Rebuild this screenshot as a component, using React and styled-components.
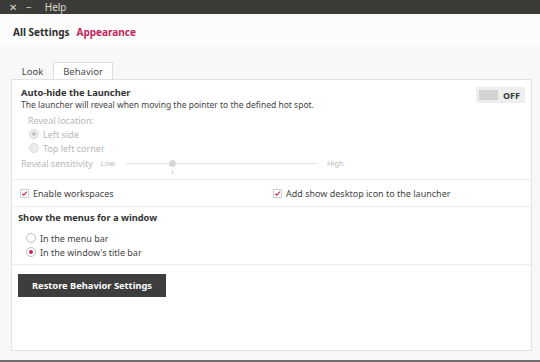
import styled, { createGlobalStyle } from 'styled-components';

const GlobalStyle = createGlobalStyle`
  html, body {
    margin: 0;
    padding: 0;
    background: #f8f8f8;
  }
  * {
    box-sizing: border-box;
  }
`;

const ACCENT = '#c7245a';
const TEXT = '#3c3c3c';
const MUTED = '#b8b8b8';

const Window = styled.div`
  display: flex;
  flex-direction: column;
  width: 540px;
  height: 362px;
  font-family: 'Noto Sans', 'Open Sans', sans-serif;
  color: ${TEXT};
  border-bottom: 2px solid #6f6f6f;
  overflow: hidden;
`;

const TopBar = styled.div`
  display: flex;
  align-items: center;
  height: 14px;
  padding-left: 9px;
  background: #3c3b37;
  color: #dfdbd2;
  font-size: 10px;
`;

const BarItem = styled.span`
  margin-right: ${(p) => p.$gap || 0}px;
  line-height: 14px;
`;

const Header = styled.div`
  display: flex;
  align-items: center;
  gap: 7px;
  height: 32px;
  padding: 4px 0 0 13px;
  background: #fcfcfc;
  font-size: 10px;
`;

const Crumb = styled.span`
  font-weight: 700;
  color: ${(p) => (p.$active ? ACCENT : '#2e2e2e')};
`;

const Body = styled.div`
  padding: 16px 8px 0 11px;
`;

const Tabs = styled.div`
  display: flex;
  height: 17px;
  padding-left: 1px;
`;

const Tab = styled.div`
  display: flex;
  align-items: center;
  justify-content: center;
  width: ${(p) => p.$w}px;
  height: 17px;
  font-size: 9.5px;
  color: #4a4a4a;
  background: ${(p) => (p.$active ? '#fff' : 'transparent')};
  border: 1px solid ${(p) => (p.$active ? '#dedede' : 'transparent')};
  border-bottom: none;
  position: relative;
  z-index: 1;
  margin-bottom: -1px;
`;

const Panel = styled.div`
  height: 272px;
  background: #fff;
  border: 1px solid #e2e2e2;
  display: flex;
  flex-direction: column;
`;

const Section = styled.div`
  padding: ${(p) => p.$pad};
  border-bottom: 1px solid #ececec;
`;

const HeadRow = styled.div`
  display: flex;
  justify-content: space-between;
  align-items: flex-start;
`;

const Title = styled.div`
  font-size: 9.3px;
  font-weight: 700;
  line-height: 12px;
  color: #333;
`;

const Desc = styled.div`
  font-size: 8.5px;
  line-height: 10px;
  margin-top: 1px;
  color: #444;
`;

const Toggle = styled.div`
  display: flex;
  align-items: center;
  width: 49px;
  height: 16px;
  padding: 0 3px;
  background: #eeeeee;
  margin-right: 6px;
`;

const Knob = styled.div`
  width: 19px;
  height: 10px;
  background: #d3d3d3;
  margin-right: 5px;
`;

const ToggleText = styled.span`
  font-size: 9px;
  font-weight: 700;
  color: #3a3a3a;
`;

const Indent = styled.div`
  padding-left: ${(p) => p.$left}px;
  margin-top: ${(p) => p.$top || 0}px;
`;

const Label = styled.div`
  font-size: 9px;
  line-height: 12px;
  color: ${(p) => (p.$muted ? MUTED : '#444')};
`;

const RadioRow = styled.div`
  display: flex;
  align-items: center;
  height: 14px;
  gap: 4px;
  font-size: 9px;
  color: ${(p) => (p.$muted ? MUTED : '#444')};
`;

const Radio = styled.span`
  width: 10px;
  height: 10px;
  border-radius: 50%;
  border: 1px solid ${(p) => (p.$muted ? '#dcdcdc' : '#bdbdbd')};
  background: ${(p) => (p.$muted ? '#ececec' : '#fff')};
  display: flex;
  align-items: center;
  justify-content: center;
  flex: none;
  &::after {
    content: '';
    display: ${(p) => (p.$on ? 'block' : 'none')};
    width: 4px;
    height: 4px;
    border-radius: 50%;
    background: ${(p) => (p.$muted ? '#c4c4c4' : ACCENT)};
  }
`;

const SliderRow = styled.div`
  display: flex;
  align-items: center;
  height: 14px;
  margin-top: 1px;
  font-size: 9px;
  color: ${MUTED};
`;

const Small = styled.span`
  font-size: 7.5px;
  color: #bbb;
  margin: ${(p) => p.$m};
`;

const Track = styled.div`
  position: relative;
  width: 191px;
  height: 1px;
  background: #e3e3e3;
`;

const Thumb = styled.span`
  position: absolute;
  left: 43px;
  top: -3px;
  width: 7px;
  height: 7px;
  border-radius: 50%;
  background: #d6d6d6;
  &::after {
    content: '';
    position: absolute;
    left: 3px;
    top: 11px;
    width: 1px;
    height: 3px;
    background: #c8c8c8;
  }
`;

const CheckGrid = styled.div`
  display: grid;
  grid-template-columns: 253px 1fr;
  align-items: center;
  height: 27px;
  padding-left: 8px;
  border-bottom: 1px solid #ececec;
`;

const CheckItem = styled.label`
  display: flex;
  align-items: center;
  gap: 4px;
  font-size: 9px;
  color: #444;
`;

const Box = styled.span`
  width: 9px;
  height: 9px;
  border: 1px solid #cfcfcf;
  background: #fff;
  display: flex;
  align-items: center;
  justify-content: center;
  flex: none;
`;

const ButtonArea = styled.div`
  padding: 7px 6px;
`;

const Button = styled.button`
  width: 148px;
  height: 23px;
  border: none;
  background: #3d3d3d;
  color: #fff;
  font-family: inherit;
  font-size: 9.3px;
  font-weight: 700;
  cursor: pointer;
`;

const Check = () => (
  <svg width="7" height="7" viewBox="0 0 7 7">
    <path d="M1.2 3.6 L2.8 5.1 L5.8 1.6" fill="none" stroke={ACCENT} strokeWidth="1.1" />
  </svg>
);

const App = () => {
  return (
    <>
      <GlobalStyle />
      <Window>
        <TopBar>
          <BarItem $gap={9}>✕</BarItem>
          <BarItem $gap={13}>−</BarItem>
          <BarItem>Help</BarItem>
        </TopBar>
        <Header>
          <Crumb>All Settings</Crumb>
          <Crumb $active>Appearance</Crumb>
        </Header>
        <Body>
          <Tabs>
            <Tab $w={41}>Look</Tab>
            <Tab $w={60} $active>Behavior</Tab>
          </Tabs>
          <Panel>
            <Section $pad="7px 0 9px 9px">
              <HeadRow>
                <div>
                  <Title>Auto-hide the Launcher</Title>
                  <Desc>The launcher will reveal when moving the pointer to the defined hot spot.</Desc>
                </div>
                <Toggle>
                  <Knob />
                  <ToggleText>OFF</ToggleText>
                </Toggle>
              </HeadRow>
              <Indent $left={7} $top={5}>
                <Label $muted>Reveal location:</Label>
              </Indent>
              <Indent $left={8}>
                <RadioRow $muted>
                  <Radio $muted $on />
                  Left side
                </RadioRow>
                <RadioRow $muted>
                  <Radio $muted />
                  Top left corner
                </RadioRow>
              </Indent>
              <SliderRow>
                Reveal sensitivity
                <Small $m="0 11px 0 8px">Low</Small>
                <Track>
                  <Thumb />
                </Track>
                <Small $m="0 0 0 10px">High</Small>
              </SliderRow>
            </Section>
            <CheckGrid>
              <CheckItem>
                <Box><Check /></Box>
                Enable workspaces
              </CheckItem>
              <CheckItem>
                <Box><Check /></Box>
                Add show desktop icon to the launcher
              </CheckItem>
            </CheckGrid>
            <Section $pad="5px 0 5px 6px">
              <Title>Show the menus for a window</Title>
              <Indent $left={8} $top={7}>
                <RadioRow>
                  <Radio />
                  In the menu bar
                </RadioRow>
                <RadioRow>
                  <Radio $on />
                  In the window's title bar
                </RadioRow>
              </Indent>
            </Section>
            <ButtonArea>
              <Button>Restore Behavior Settings</Button>
            </ButtonArea>
          </Panel>
        </Body>
      </Window>
    </>
  );
};

export default App;
